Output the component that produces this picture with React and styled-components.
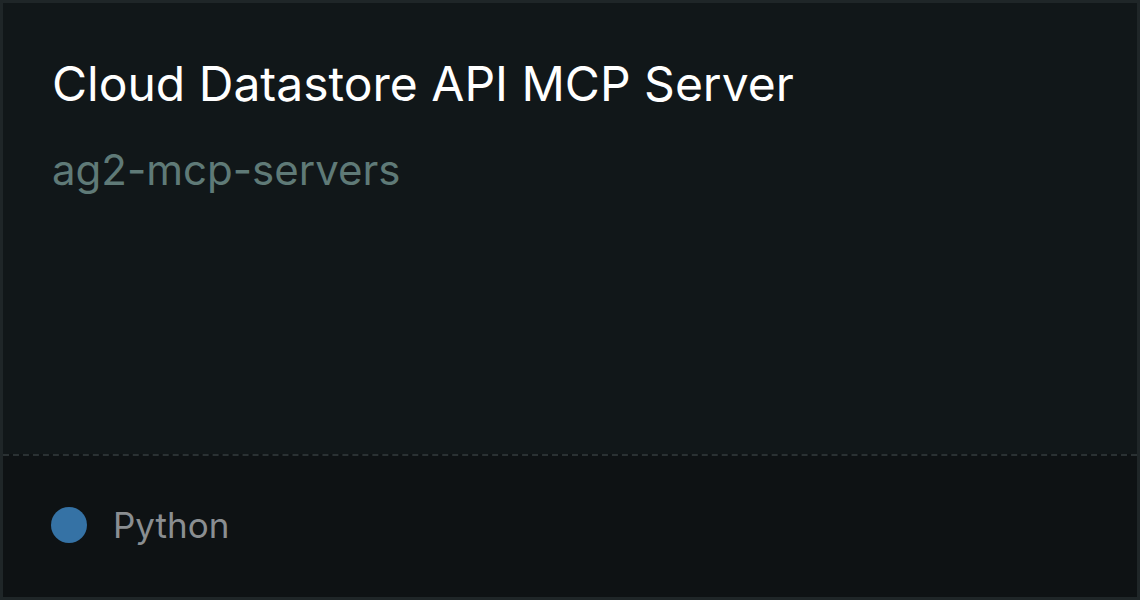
import React from "react";
import styled, { createGlobalStyle } from "styled-components";

const GlobalStyle = createGlobalStyle`
  html, body {
    margin: 0;
    padding: 0;
    background: #1f2628;
  }
  body {
    font-family: Inter, "Noto Sans", sans-serif;
  }
`;

const Card = styled.div`
  width: 1140px;
  height: 600px;
  box-sizing: border-box;
  border: 3px solid #1f2628;
  background: #111719;
  display: flex;
  flex-direction: column;
`;

const Body = styled.div`
  flex: 1;
  padding: 52px 49px 0;
  display: flex;
  flex-direction: column;
  gap: 32px;
`;

const Title = styled.h1`
  margin: 0;
  color: #ffffff;
  font-size: 48px;
  font-weight: 400;
  line-height: 1.2;
`;

const Owner = styled.div`
  color: #5f7a77;
  font-size: 42px;
  line-height: 1.2;
`;

const Footer = styled.div`
  height: 143px;
  box-sizing: border-box;
  border-top: 2px dashed #2a3133;
  background: #0e1214;
  display: flex;
  align-items: center;
  gap: 26px;
  padding: 0 48px 4px;
`;

const Dot = styled.span`
  width: 36px;
  height: 36px;
  border-radius: 50%;
  background: ${(p) => p.color};
`;

const Lang = styled.span`
  color: #8a8e91;
  font-size: 35px;
`;

const App = () => {
  return (
    <>
      <GlobalStyle />
      <Card>
        <Body>
          <Title>Cloud Datastore API MCP Server</Title>
          <Owner>ag2-mcp-servers</Owner>
        </Body>
        <Footer>
          <Dot color="#3572a5" />
          <Lang>Python</Lang>
        </Footer>
      </Card>
    </>
  );
};

export default App;
